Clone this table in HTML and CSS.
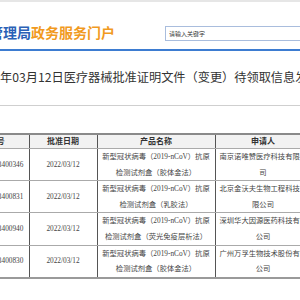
FILE: index.html
```html
<!DOCTYPE html>
<html lang="zh-CN">
<head>
  <meta charset="UTF-8" />
  <title>医疗器械批准证明文件待领取信息</title>
  <link rel="stylesheet" href="styles.css">
</head>
<body>

  <div class="topbar"></div>

  <div class="header">
    <div class="logo"><span class="logo-blue">国家药品监督管理局</span><span class="logo-orange">政务服务门户</span></div>
    <input type="text" class="search" placeholder="请输入关键字" />
  </div>

  <div class="title">2022年03月12日医疗器械批准证明文件（变更）待领取信息发布</div>

  <table class="list">
    <colgroup>
      <col class="c-no" />
      <col class="c-date" />
      <col class="c-name" />
      <col class="c-who" />
      <col class="c-more" />
    </colgroup>
    <tr>
      <th>注册证号</th>
      <th>批准日期</th>
      <th>产品名称</th>
      <th>申请人</th>
      <th>备注</th>
    </tr>
    <tr>
      <td>国械注准20223400346</td>
      <td>2022/03/12</td>
      <td>新型冠状病毒（2019-nCoV）抗原<br>检测试剂盒（胶体金法）</td>
      <td>南京诺唯赞医疗科技有限公<br>司</td>
      <td></td>
    </tr>
    <tr>
      <td>国械注准20223400831</td>
      <td>2022/03/12</td>
      <td>新型冠状病毒（2019-nCoV）抗原<br>检测试剂盒（乳胶法）</td>
      <td>北京金沃夫生物工程科技有<br>限公司</td>
      <td></td>
    </tr>
    <tr>
      <td>国械注准20223400940</td>
      <td>2022/03/12</td>
      <td>新型冠状病毒（2019-nCoV）抗原<br>检测试剂盒（荧光免疫层析法）</td>
      <td>深圳华大因源医药科技有限<br>公司</td>
      <td></td>
    </tr>
    <tr>
      <td>国械注准20223400830</td>
      <td>2022/03/12</td>
      <td>新型冠状病毒（2019-nCoV）抗原<br>检测试剂盒（胶体金法）</td>
      <td>广州万孚生物技术股份有限<br>公司</td>
      <td></td>
    </tr>
  </table>

</body>
</html>
```

FILE: styles.css
```css
body {
  margin: 0;
  background: #fff;
  font-family: 'Noto Sans CJK SC', sans-serif;
  color: #333;
  overflow: hidden;
  width: 300px;
}

.topbar {
  height: 2px;
  background: #e6e6e6;
}

.header {
  display: flex;
  align-items: flex-start;
  height: 49px;
  box-sizing: border-box;
  padding-top: 22px;
  border-bottom: 2px solid #3d7cd1;
  white-space: nowrap;
}

.logo {
  flex-shrink: 0;
  margin-left: -95px;
  font-size: 14px;
  line-height: 16px;
  font-weight: bold;
}

.logo-blue {
  color: #2a61b6;
}

.logo-orange {
  color: #f19a1f;
}

.search {
  flex-shrink: 0;
  margin: 2px 0 0 50px;
  width: 200px;
  height: 15px;
  box-sizing: border-box;
  padding: 0 3px;
  border: 1px solid #a9bddd;
  font-family: 'Noto Sans CJK SC', sans-serif;
  font-size: 6px;
  outline: none;
}

.search::placeholder {
  color: #333;
}

.title {
  margin: 18px 0 0 -27px;
  padding-bottom: 20px;
  width: 400px;
  font-size: 12.2px;
  line-height: 16px;
  color: #333;
  white-space: nowrap;
  border-bottom: 1px solid #cfcfcf;
}

.list {
  margin: 27px 0 0 -51px;
  border-collapse: collapse;
  table-layout: fixed;
  width: 460px;
  font-family: 'Liberation Serif', 'Noto Sans CJK SC', serif;
  font-size: 7.3px;
  color: #444;
  border-top: 2px solid #8a8a8a;
  border-bottom: 2px solid #9a9a9a;
}

.c-no { width: 80px; }
.c-date { width: 68px; }
.c-name { width: 118px; }
.c-who { width: 96px; }
.c-more { width: 98px; }

.list th {
  height: 13px;
  padding: 0;
  background: #f2f2f2;
  font-size: 8px;
  line-height: 13px;
  font-weight: bold;
  color: #333;
  border-left: 1px solid #555;
  border-bottom: 1px solid #aaa;
}

.list td {
  padding: 0 4px;
  line-height: 15.6px;
  text-align: center;
  vertical-align: middle;
  white-space: nowrap;
  border-left: 1px solid #555;
  border-bottom: 1px solid #aaa;
}

.list th:first-child,
.list td:first-child {
  border-left: none;
}
```
